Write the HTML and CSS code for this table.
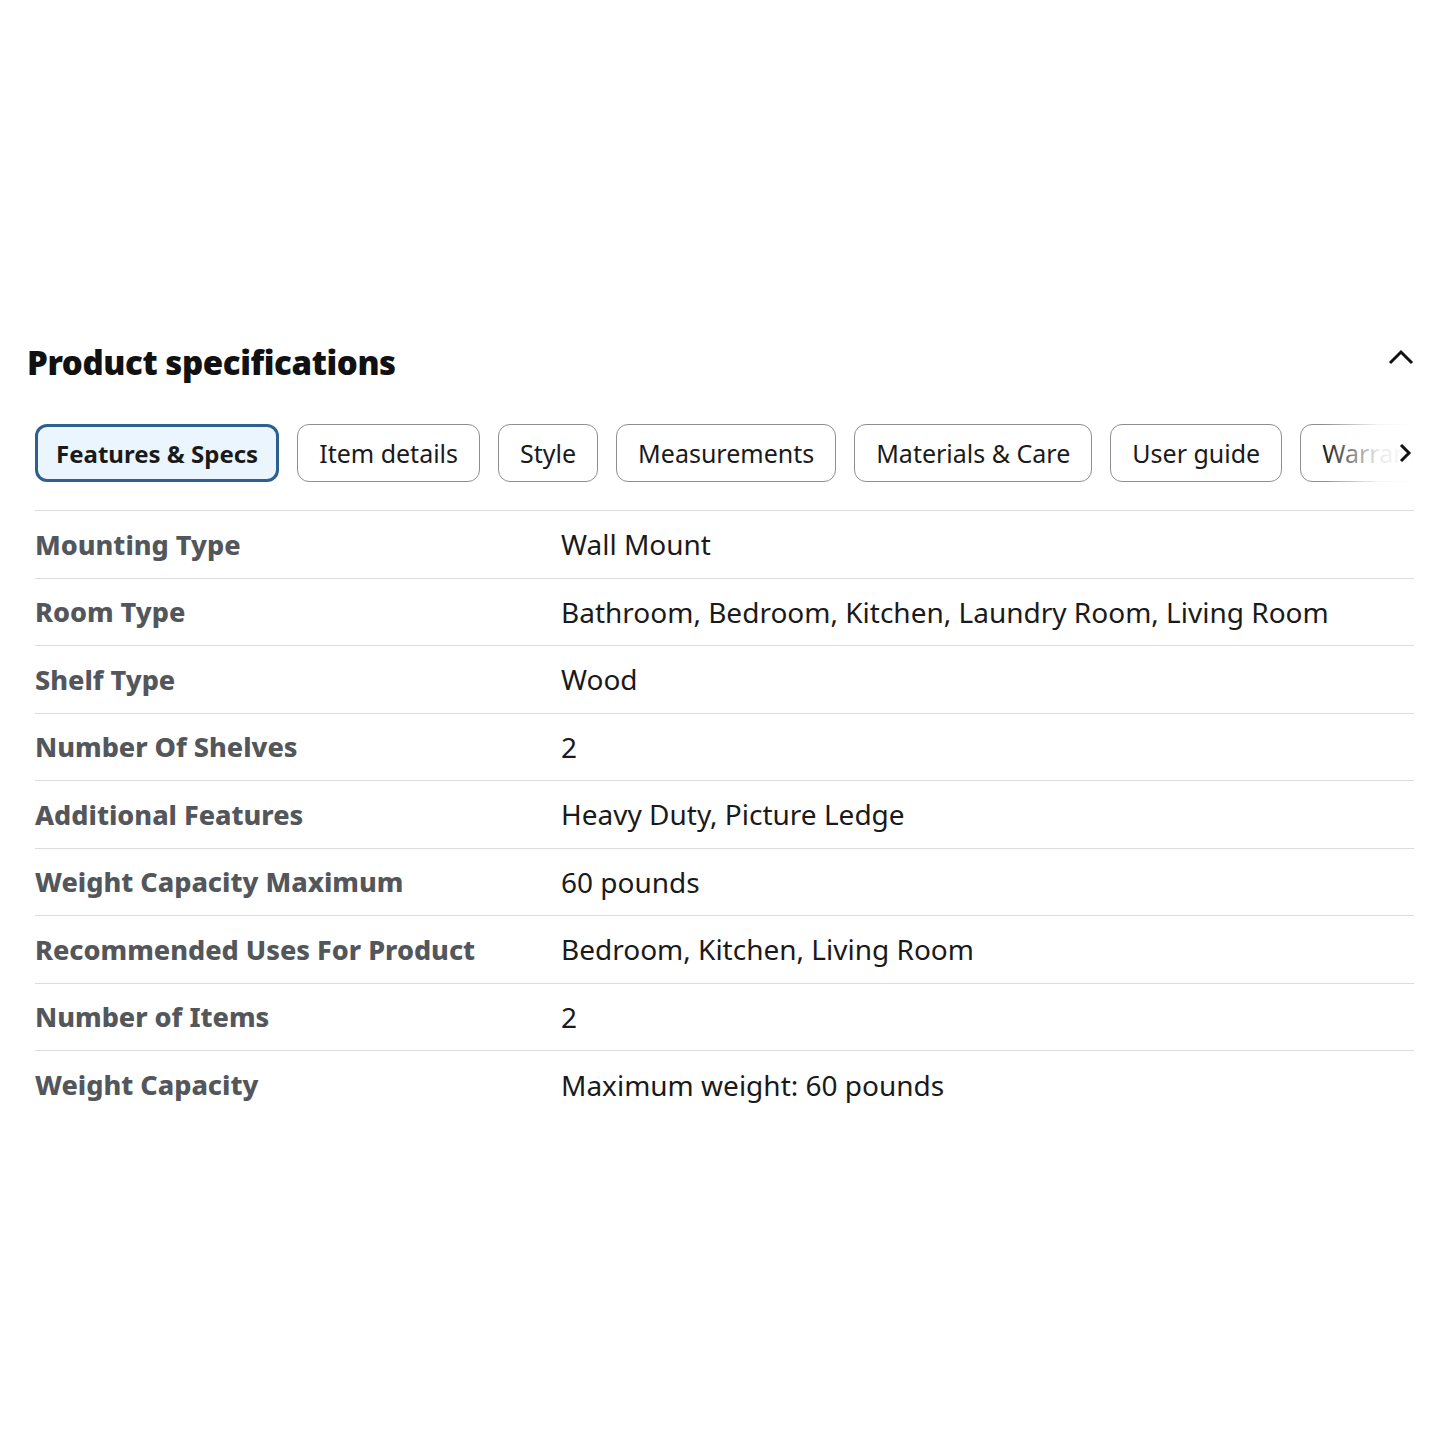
FILE: index.html
```html
<!DOCTYPE html>
<html lang="en">
<head>
   <meta charset="UTF-8">
   <meta name="viewport" content="width=device-width, initial-scale=1.0">
   <title>Product specifications</title>
   <link rel="stylesheet" href="styles.css">
</head>
<body>
   <section class="specs">
      <div class="specs-header">
         <h2>Product specifications</h2>
         <button class="collapse" aria-label="Collapse">
            <svg width="26" height="16" viewBox="0 0 26 16"><path d="M2 14 L13 3 L24 14" fill="none" stroke="#111" stroke-width="3"/></svg>
         </button>
      </div>
      <div class="tabs-wrap">
         <div class="tabs">
            <button class="tab active">Features &amp; Specs</button>
            <button class="tab">Item details</button>
            <button class="tab">Style</button>
            <button class="tab">Measurements</button>
            <button class="tab">Materials &amp; Care</button>
            <button class="tab">User guide</button>
            <button class="tab">Warranty</button>
         </div>
         <div class="tabs-fade">
            <svg width="14" height="22" viewBox="0 0 14 22"><path d="M3 3 L11 11 L3 19" fill="none" stroke="#111" stroke-width="3"/></svg>
         </div>
      </div>
      <table class="spec-table">
         <tr><th>Mounting Type</th><td>Wall Mount</td></tr>
         <tr><th>Room Type</th><td>Bathroom, Bedroom, Kitchen, Laundry Room, Living Room</td></tr>
         <tr><th>Shelf Type</th><td>Wood</td></tr>
         <tr><th>Number Of Shelves</th><td>2</td></tr>
         <tr><th>Additional Features</th><td>Heavy Duty, Picture Ledge</td></tr>
         <tr><th>Weight Capacity Maximum</th><td>60 pounds</td></tr>
         <tr><th>Recommended Uses For Product</th><td>Bedroom, Kitchen, Living Room</td></tr>
         <tr><th>Number of Items</th><td>2</td></tr>
         <tr><th>Weight Capacity</th><td>Maximum weight: 60 pounds</td></tr>
      </table>
   </section>
</body>
</html>
```

FILE: styles.css
```css
*{
   margin: 0;
   padding: 0;
   box-sizing: border-box;
}
body{
   background: #fff;
   font-family: "Noto Sans", "Open Sans", sans-serif;
   color: #1a1a1a;
}
.specs{
   padding: 336px 26px 0 27px;
}
.specs-header{
   display: flex;
   justify-content: space-between;
   align-items: center;
   height: 52px;
}
.specs-header h2{
   font-size: 33px;
   font-weight: 900;
   letter-spacing: -0.4px;
   color: #111;
}
.collapse{
   border: 0;
   background: none;
   display: flex;
   margin-top: -10px;
}
.tabs-wrap{
   position: relative;
   margin: 36px 0 28px 8px;
   overflow: hidden;
}
.tabs{
   display: flex;
   gap: 18px;
   white-space: nowrap;
}
.tab{
   flex: none;
   height: 58px;
   padding: 0 21px;
   border: 1px solid #8f8f8f;
   border-radius: 12px;
   background: #fff;
   font-family: inherit;
   font-size: 25px;
   color: #1a1a1a;
}
.tab.active{
   border: 3px solid #2e5f8e;
   background: #eaf5fd;
   font-weight: 700;
   font-size: 24px;
   padding: 0 18px;
}
.tabs-fade{
   position: absolute;
   top: 0;
   right: 0;
   width: 90px;
   height: 58px;
   display: flex;
   align-items: center;
   justify-content: flex-end;
   padding-right: 2px;
   background: linear-gradient(to right, rgba(255,255,255,0), rgba(255,255,255,0.9) 60%, #fff);
}
.spec-table{
   width: calc(100% - 8px);
   margin-left: 8px;
   border-collapse: collapse;
   border-top: 1px solid #dcdcdc;
}
.spec-table tr{
   border-bottom: 1px solid #dcdcdc;
}
.spec-table tr:last-child{
   border-bottom: 0;
}
.spec-table th, .spec-table td{
   height: 67.5px;
   text-align: left;
   vertical-align: middle;
}
.spec-table th{
   width: 526px;
   font-size: 27px;
   font-weight: 800;
   color: #53575b;
}
.spec-table td{
   font-size: 28px;
   color: #1a1a1a;
}
```
